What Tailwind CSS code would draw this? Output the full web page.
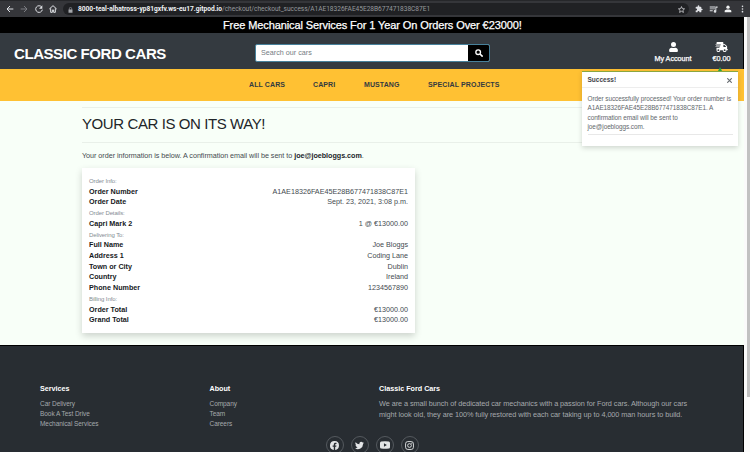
<!DOCTYPE html>
<html lang="en">
<head>
<meta charset="utf-8">
<title>Classic Ford Cars</title>
<script src="https://cdn.jsdelivr.net/npm/@tailwindcss/browser@4"></script>
</head>
<body class="w-[750px] h-[452px] overflow-hidden bg-[#f8fff8] font-['Liberation_Sans',Arial,sans-serif] text-[#444a4f] whitespace-nowrap">
<div class="relative flex h-[452px] flex-col">
  <!-- Browser toolbar -->
  <div class="flex h-[17px] shrink-0 items-center border-t border-[#26272a] bg-[#35363a] pl-[6px] text-[#dfe1e5]">
    <svg class="size-[8px] shrink-0" viewBox="0 0 24 24" fill="none" stroke="currentColor" stroke-width="3"><path d="M22 12H4M12 3l-9 9 9 9"/></svg>
    <svg class="ml-[6px] size-[8px] shrink-0 text-[#85878b]" viewBox="0 0 24 24" fill="none" stroke="currentColor" stroke-width="2.6"><path d="M2 12h18M12 3l9 9-9 9"/></svg>
    <svg class="ml-[7px] size-[8px] shrink-0" viewBox="0 0 24 24" fill="none" stroke="currentColor" stroke-width="3"><path d="M20 6a10 10 0 1 0 2 8"/><path d="M22 1v10H12z" fill="currentColor" stroke="none"/></svg>
    <svg class="ml-[6px] size-[8px] shrink-0" viewBox="0 0 24 24" fill="none" stroke="currentColor" stroke-width="3"><path d="M1 12L12 2l11 10M5 10v12h5v-7h4v7h5V10"/></svg>
    <div class="ml-[6px] flex h-[12px] w-[626px] shrink-0 items-center rounded-full bg-[#202124] pl-[5px] pr-[4px] pt-px font-[Roboto,sans-serif] text-[6.6px]">
      <svg class="h-[6px] w-[5px] shrink-0 text-[#a4a7ab]" viewBox="0 0 20 24"><path d="M2 10h16v13H2z" fill="currentColor"/><path d="M5.500 11V6a4.500 4.500 0 0 1 9 0v5" fill="none" stroke="currentColor" stroke-width="2.500"/></svg>
      <span class="ml-[5px] w-[144px] shrink-0 font-bold tracking-[-0.005px] text-[#f1f3f4]">8000-teal-albatross-yp81gxfv.ws-eu17.gitpod.io</span>
      <span class="tracking-[-0.035px] text-[#96999d]">/checkout/checkout_success/A1AE18326FAE45E28B677471838C87E1</span>
      <svg class="ml-auto size-[7px] shrink-0" viewBox="0 0 24 24" fill="none" stroke="currentColor" stroke-width="2.500"><path d="M12 2l3 7 7.500.7-5.700 5 1.700 7.300-6.500-4-6.500 4 1.700-7.300-5.700-5L9 9z"/></svg>
    </div>
    <svg class="ml-[6px] size-[8px] shrink-0" viewBox="0 0 24 24" fill="currentColor"><path d="M20.500 11H19V7a2 2 0 0 0-2-2h-4V3.500a2.500 2.500 0 0 0-5 0V5H4a2 2 0 0 0-2 2v3.800h1.500a2.700 2.700 0 0 1 0 5.400H2V20a2 2 0 0 0 2 2h3.800v-1.500a2.700 2.700 0 0 1 5.400 0V22H17a2 2 0 0 0 2-2v-4h1.500a2.500 2.500 0 0 0 0-5z"/></svg>
    <svg class="ml-[6px] size-[9px] shrink-0" viewBox="0 0 24 24" fill="currentColor"><path d="M2 4h14v2.500H2zM2 9h14v2.500H2zM2 14h8v2.500H2zM17 4h6v3h-3.500v10a3.500 3.500 0 1 1-2.500-3.300z"/></svg>
    <svg class="ml-[6px] size-[8px] shrink-0 text-[#f1f3f4]" viewBox="0 0 24 24" fill="currentColor"><circle cx="12" cy="6.500" r="5"/><path d="M2 22v-4c0-6 20-6 20 0v4z"/></svg>
    <svg class="ml-[9px] h-[8px] w-[3px] shrink-0" viewBox="0 0 8 24" fill="currentColor"><circle cx="4" cy="4" r="2.500"/><circle cx="4" cy="12" r="2.500"/><circle cx="4" cy="20" r="2.500"/></svg>
  </div>

  <div class="flex min-h-0 grow">
    <div class="flex w-[744px] shrink-0 flex-col">
      <div class="flex h-[16px] shrink-0 items-center bg-black pl-[223px] text-[11px] tracking-[-0.1px] text-white [-webkit-text-stroke:0.25px_white]">Free Mechanical Services For 1 Year On Orders Over €23000!</div>

      <header class="flex h-[36px] shrink-0 items-center border-r border-black bg-[#343a40] text-white">
        <h1 class="ml-[14px] mt-[4px] w-[241px] text-[15px] font-bold leading-none tracking-[-0.43px]">CLASSIC FORD CARS</h1>
        <div class="mt-[3px] flex h-[18px] w-[235px] shrink-0 overflow-hidden rounded-[2px] border border-[#47819b] bg-white">
          <span class="flex w-[212px] items-center pl-[5px] pt-[2px] text-[7.2px] text-[#757c83]">Search our cars</span>
          <span class="flex grow items-center justify-center bg-black">
            <svg class="size-[8px]" viewBox="0 0 24 24" fill="none" stroke="white" stroke-width="4"><circle cx="9.500" cy="9.500" r="7"/><path d="M15 15l8 8" stroke-width="5"/></svg>
          </span>
        </div>
        <div class="ml-[155px] mt-[3px] flex w-[56px] flex-col items-center">
          <svg class="h-[10px] w-[9px]" viewBox="0 0 448 512" fill="currentColor"><path d="M224 256a128 128 0 1 0 0-256 128 128 0 0 0 0 256zm90 32h-17c-45 21-101 21-146 0h-17C60 288 0 348 0 422v42a48 48 0 0 0 48 48h352a48 48 0 0 0 48-48v-42c0-74-60-134-134-134z"/></svg>
          <span class="mt-[3px] text-[7.2px] leading-[8px] [-webkit-text-stroke:0.25px_white]">My Account</span>
        </div>
        <div class="ml-[4.500px] mt-[3px] flex w-[32px] flex-col items-center">
          <svg class="h-[10px] w-[13px]" viewBox="0 0 640 512" fill="currentColor"><path d="M624 352h-16V244c0-13-5-25-14-34L494 110c-9-9-21-14-34-14h-44V48c0-26-22-48-48-48H112C86 0 64 22 64 48v48H8v32h272v32H40v32h208v32H8v32h208v32H64v128a96 96 0 0 0 192 0h128a96 96 0 0 0 192 0h48c9 0 16-7 16-16v-32c0-9-7-16-16-16zM160 464a48 48 0 1 1 0-96 48 48 0 0 1 0 96zm320 0a48 48 0 1 1 0-96 48 48 0 0 1 0 96zm80-208H416V144h44l100 100z"/></svg>
          <span class="mt-[3px] text-[7.2px] leading-[8px] [-webkit-text-stroke:0.25px_white]">€0.00</span>
        </div>
      </header>

      <nav class="flex h-[32px] shrink-0 items-center bg-[#ffc133] pl-[249px] text-[7px] font-bold tracking-[0.1px] text-[#343a40]">
        <a class="w-[64px]">ALL CARS</a><a class="w-[51px]">CAPRI</a><a class="w-[64px]">MUSTANG</a><a>SPECIAL PROJECTS</a>
      </nav>

      <main class="h-[244px] shrink-0 px-[82px] pt-[6px]">
        <div class="h-px bg-[#e9f0e9]"></div>
        <h2 class="flex h-[34px] items-center pb-[2px] text-[15px] tracking-[-0.41px] text-[#212529]">YOUR CAR IS ON ITS WAY!</h2>
        <div class="h-px bg-[#e9f0e9]"></div>
        <p class="mt-[8px] h-[10px] text-[7.2px] leading-[10px] tracking-[-0.03px]">Your order information is below. A confirmation email will be sent to <strong class="text-[#212529]">joe@joebloggs.com</strong>.</p>
        <div class="mt-[7px] h-[165px] w-[333px] bg-white px-[7px] pt-[8px] text-[7.2px] leading-[10.72px] shadow-[0_3px_7px_rgba(0,0,0,0.18)]">
          <div class="text-[6px] leading-[10.72px] tracking-[-0.1px] text-[#858c92]">Order Info:</div>
          <div class="flex justify-between"><b class="text-[#16191c]">Order Number</b><span>A1AE18326FAE45E28B677471838C87E1</span></div>
          <div class="flex justify-between"><b class="text-[#16191c]">Order Date</b><span>Sept. 23, 2021, 3:08 p.m.</span></div>
          <div class="text-[6px] leading-[10.72px] tracking-[-0.1px] text-[#858c92]">Order Details:</div>
          <div class="flex justify-between"><b class="text-[#16191c]">Capri Mark 2</b><span>1 @ €13000.00</span></div>
          <div class="text-[6px] leading-[10.72px] tracking-[-0.1px] text-[#858c92]">Delivering To:</div>
          <div class="flex justify-between"><b class="text-[#16191c]">Full Name</b><span>Joe Bloggs</span></div>
          <div class="flex justify-between"><b class="text-[#16191c]">Address 1</b><span>Coding Lane</span></div>
          <div class="flex justify-between"><b class="text-[#16191c]">Town or City</b><span>Dublin</span></div>
          <div class="flex justify-between"><b class="text-[#16191c]">Country</b><span>Ireland</span></div>
          <div class="flex justify-between"><b class="text-[#16191c]">Phone Number</b><span>1234567890</span></div>
          <div class="text-[6px] leading-[10.72px] tracking-[-0.1px] text-[#858c92]">Billing Info:</div>
          <div class="flex justify-between"><b class="text-[#16191c]">Order Total</b><span>€13000.00</span></div>
          <div class="flex justify-between"><b class="text-[#16191c]">Grand Total</b><span>€13000.00</span></div>
        </div>
      </main>

      <footer class="h-[107px] shrink-0 border-r border-t border-black bg-[#282d32] text-[#a5a9ac]">
        <div class="flex h-[89px] pl-[40px] pt-[38px] text-[6.5px] leading-[9.8px] tracking-[-0.06px]">
          <div class="w-[169.500px]"><h3 class="mb-[5px] text-[7.2px] font-bold leading-[10px] tracking-normal text-white">Services</h3><p>Car Delivery</p><p>Book A Test Drive</p><p>Mechanical Services</p></div>
          <div class="w-[169.500px]"><h3 class="mb-[5px] text-[7.2px] font-bold leading-[10px] tracking-normal text-white">About</h3><p>Company</p><p>Team</p><p>Careers</p></div>
          <div class="text-[7.3px] leading-[10.8px]"><h3 class="mb-[5px] text-[7.2px] font-bold leading-[10px] tracking-normal text-white">Classic Ford Cars</h3><p>We are a small bunch of dedicated car mechanics with a passion for Ford cars. Although our cars</p><p>might look old, they are 100% fully restored with each car taking up to 4,000 man hours to build.</p></div>
        </div>
        <div class="flex h-[17px] gap-[7px] overflow-hidden pl-[325.500px] pt-[1px] text-[#e3e5e6]">
          <span class="flex size-[18px] shrink-0 items-center justify-center rounded-full border border-[#54595e]"><svg class="size-[9px]" viewBox="0 0 24 24" fill="currentColor"><path d="M24 12A12 12 0 1 0 10.100 23.900v-8.400H7V12h3.100V9.300c0-3 1.800-4.700 4.500-4.700 1.300 0 2.700.3 2.700.3v3h-1.500c-1.500 0-2 .9-2 1.900V12h3.400l-.6 3.500h-2.800v8.400A12 12 0 0 0 24 12z"/></svg></span>
          <span class="flex size-[18px] shrink-0 items-center justify-center rounded-full border border-[#54595e]"><svg class="size-[9px]" viewBox="0 0 24 24" fill="currentColor"><path d="M24 4.600a10 10 0 0 1-2.800.8 5 5 0 0 0 2.100-2.700 10 10 0 0 1-3.100 1.200 4.900 4.900 0 0 0-8.400 4.500A14 14 0 0 1 1.700 3.100a4.900 4.900 0 0 0 1.500 6.600 5 5 0 0 1-2.200-.6 4.900 4.900 0 0 0 3.900 4.900 5 5 0 0 1-2.200.1 4.900 4.900 0 0 0 4.600 3.400A10 10 0 0 1 0 19.500 14 14 0 0 0 21.500 7.100 10 10 0 0 0 24 4.600z"/></svg></span>
          <span class="flex size-[18px] shrink-0 items-center justify-center rounded-full border border-[#54595e]"><svg class="h-[8px] w-[10px]" viewBox="0 0 24 18" fill="currentColor" fill-rule="evenodd"><path d="M3 .5Q12-.5 21 .5q3 .5 3 4v9q0 3.500-3 4-9 1-18 0-3-.5-3-4v-9q0-3.500 3-4zM9.500 5v8l7-4z"/></svg></span>
          <span class="flex size-[18px] shrink-0 items-center justify-center rounded-full border border-[#54595e]"><svg class="size-[9px]" viewBox="0 0 24 24" fill="none" stroke="currentColor" stroke-width="2.400"><rect x="1.500" y="1.500" width="21" height="21" rx="6"/><circle cx="12" cy="12" r="5"/><circle cx="18.200" cy="5.800" r=".6"/></svg></span>
        </div>
      </footer>
    </div>
    <!-- Scrollbar -->
    <div class="flex grow justify-end bg-[#fafafa]"><div class="h-[380px] w-[3px] bg-[#c1c1c1]"></div></div>
  </div>

  <!-- Success notification -->
  <div class="absolute left-[718px] top-[67px] size-0 border-x-[2px] border-b-[4px] border-x-transparent border-b-[#28a745]"></div>
  <div class="absolute left-[582px] top-[71px] h-[75px] w-[156px] border-t border-[#8ba640] bg-white text-[6.5px] shadow-[0_2px_5px_rgba(0,0,0,0.16)]">
    <div class="flex h-[16px] items-center justify-between border-b border-[#ededed] pl-[5.500px] pr-[6px] pt-px"><b class="text-[#3f4449]">Success!</b>
      <svg class="size-[5px]" viewBox="0 0 10 10" stroke="#666b70" stroke-width="2.200"><path d="M.5.5l9 9M9.500.5l-9 9"/></svg></div>
    <div class="mx-[5.500px] border-b border-[#e8e8e8] pb-[2px] pt-[5.500px] text-[6.4px] leading-[9.500px] tracking-[-0.06px] text-[#62676b]">Order successfully processed! Your order number is<br>A1AE18326FAE45E28B677471838C87E1. A<br>confirmation email will be sent to<br>joe@joebloggs.com.</div>
  </div>
</div>
</body>
</html>
